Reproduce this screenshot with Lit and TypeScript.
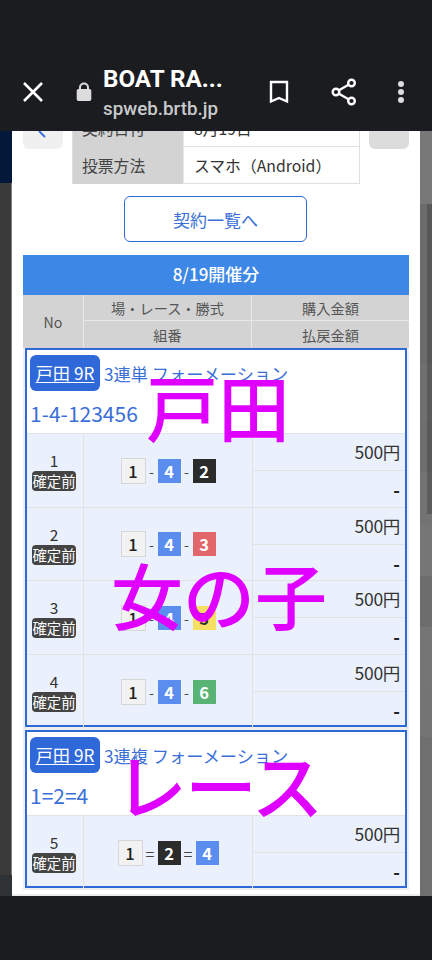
import { LitElement, html, css } from "lit";
import { customElement } from "lit/decorators.js";

const B: Record<number, string> = { 1: "w", 2: "k", 3: "r", 4: "b", 5: "y", 6: "g" };

const group1 = [
  { no: 1, seq: [1, 4, 2] },
  { no: 2, seq: [1, 4, 3] },
  { no: 3, seq: [1, 4, 5] },
  { no: 4, seq: [1, 4, 6] },
];

const rightStrip = [
  { h: 73, c: "#787878" },
  { h: 160, c: "#6c6c6c" },
  { h: 56, c: "#707070" },
  { h: 52, c: "#6e6e6e" },
  { h: 53, c: "#737373" },
  { h: 51, c: "#767676" },
  { h: 51, c: "#6d6d6d" },
  { h: 58, c: "#757575" },
  { h: 52, c: "#747474" },
  { h: 159, c: "#6f6f6f" },
];

@customElement("app-root")
export class AppRoot extends LitElement {
  static styles = css`
    :host {
      display: block;
      width: 432px;
      height: 960px;
      overflow: hidden;
      background: #1b1c20;
      font-family: "Noto Sans CJK JP", "Noto Sans", sans-serif;
    }
    .topbar {
      height: 78px;
      padding-top: 53px;
      display: flex;
      align-items: center;
      background: #1b1c20;
      color: #fff;
    }
    .topbar svg { display: block; flex: none; }
    .close { margin-left: 21px; }
    .lock { margin-left: 31px; }
    .titles {
      margin-left: 11px;
      width: 128px;
      display: flex;
      flex-direction: column;
      font-family: Roboto, sans-serif;
      margin-top: 1px;
    }
    .t1 { font-size: 24.2px; line-height: 28px; font-weight: 700; white-space: nowrap; }
    .t2 { font-size: 18.8px; line-height: 24px; margin-top: 4px; font-weight: 500; color: #c9cacc; white-space: nowrap; }
    .bm { margin-left: 38px; }
    .sh { margin-left: 42px; }
    .dots { margin-left: 41px; }

    .main { display: flex; height: 765px; overflow: hidden; }
    .left { width: 12px; flex: none; display: flex; flex-direction: column; background: #3a3a3a; box-shadow: inset -1px 0 0 #808080; }
    .navy { height: 52px; background: #04183a; }
    .lfill { flex: 1; }
    .lfoot { height: 21px; background: #2f3336; }
    .right { width: 12px; flex: none; position: relative; display: flex; flex-direction: column; box-shadow: inset 1px 0 0 #999; }
    .band { position: absolute; right: 0; top: 73px; width: 5px; height: 310px; background: rgba(40, 40, 40, 0.3); }
    .sheet { width: 408px; flex: none; background: #fff; padding: 0 11px; box-sizing: border-box; position: relative; box-shadow: inset 0 -2px 0 #ececec; }

    .top { display: grid; grid-template-columns: 40px 288px 40px; column-gap: 9px; align-items: start; height: 53px; }
    .nav { height: 18px; border-radius: 0 0 6px 6px; background: #f0f0f0; display: flex; justify-content: center; align-items: flex-start; overflow: hidden; }
    .nav.off { background: #dcdcdc; }
    .info { height: 53px; overflow: hidden; display: flex; flex-direction: column; justify-content: flex-end; }
    .irow { display: grid; grid-template-columns: 111px 1fr; height: 37px; flex: none; box-sizing: border-box; border: solid #e0e0e0; border-width: 0 1px 1px 1px; font-size: 15.8px; line-height: 38px; color: #333; }
    .irow .k { background: #d3d3d3; padding-left: 9px; color: #444; border-right: 1px solid #e8e8e8; }
    .irow .v { padding-left: 10px; }

    .btn {
      display: flex; align-items: center; justify-content: center;
      width: 183px; height: 46px; box-sizing: border-box;
      margin: 12px auto 0 101px;
      border: 1px solid #2f6bd6; border-radius: 6px;
      color: #3a70d8; font-size: 17px; background: #fff;
    }
    .sec {
      margin-top: 13px; height: 40px; line-height: 38px; text-align: center;
      background: #3d88e6; color: #fff; font-size: 17px; font-weight: 500;
    }
    .thead {
      display: grid; grid-template-columns: 61px 168px 157px; grid-template-rows: 26px 27px;
      background: #d3d3d3; color: #555; font-size: 14.2px;
    }
    .thead div { display: flex; align-items: center; justify-content: center; }
    .thead .no { grid-row: span 2; border-right: 1px solid #e8e8e8; }
    .thead .c2 { border-right: 1px solid #e8e8e8; }
    .thead .b { border-bottom: 1px solid #e8e8e8; }

    .groups { background: #eeeeee; padding: 0 2px 2px; }
    .frame { border: 2px solid #2f68d8; background: #fff; }
    .frame + .frame { margin-top: 3px; }
    .fhead { height: 83px; box-sizing: border-box; padding: 5px 0 0 3px; color: #3a6fd8; }
    .line1 { display: flex; align-items: center; height: 36px; font-size: 17.2px; white-space: nowrap; }
    .place { display: block; background: #2f68d8; color: #fff; border-radius: 6px; width: 70px; height: 36px; line-height: 35px; text-align: center; text-decoration: underline; text-underline-offset: 2px; margin-right: 4px; font-size: 17.2px; }
    .line2 { font-size: 21px; line-height: 30px; margin-top: 7px; }
    .row { display: grid; grid-template-columns: 56px 1px 168px 1px 1fr; height: 73.7px; background: #eaf1fd; border-top: 1px solid #e2e2e2; box-sizing: border-box; color: #333; }
    .row:last-child { height: 71px; }
    .sep { background: #e2e2e2; }
    .nocol { display: flex; flex-direction: column; align-items: center; justify-content: center; padding-right: 2px; font-size: 15.5px; line-height: 21px; }
    .tag { background: #444; color: #fff; border-radius: 4px; width: 44px; height: 20px; line-height: 19px; text-align: center; font-size: 14.4px; white-space: nowrap; }
    .seq { display: flex; align-items: center; justify-content: center; font-size: 14px; color: #444; }
    .seq .d { width: 12px; text-align: center; }
    .seq .e { width: 15px; text-align: center; font-size: 16px; }
    .bd { width: 23px; height: 24px; line-height: 24px; text-align: center; font-size: 16.5px; font-weight: 700; color: #fff; }
    .bd.w { background: #f2f2f2; color: #222; border: 1px solid #d6d6d6; font-weight: 500; }
    .bd.k { background: #2b2b2b; }
    .bd.r { background: #e2676a; }
    .bd.b { background: #5b8def; }
    .bd.y { background: #f6e064; color: #333; }
    .bd.g { background: #58b374; }
    .amt { display: grid; grid-template-rows: 37px 1fr; }
    .amt div { text-align: right; padding-right: 5px; }
    .a1 { font-size: 17.5px; letter-spacing: -0.3px; line-height: 36px; border-bottom: 1px solid #e2e2e2; color: #333; }
    .a2 { font-size: 18px; font-weight: 700; line-height: 36px; color: #222; }

    .mark {
      position: absolute; color: #df00ff; font-size: 72px; line-height: 72px;
      font-weight: 500; white-space: nowrap; pointer-events: none;
    }
    .m1 { left: 134px; top: 238px; }
    .m2 { left: 99px; top: 426px; }
    .m3 { left: 103px; top: 616px; letter-spacing: -2px; }
  `;

  private badge(n: number) {
    return html`<span class="bd ${B[n]}">${n}</span>`;
  }

  private row(no: number, seq: number[], sep: string) {
    return html`<div class="row">
      <div class="nocol"><span>${no}</span><span class="tag">確定前</span></div>
      <div class="sep"></div>
      <div class="seq">
        ${seq.map(
          (n, i) => html`${i > 0 ? html`<span class=${sep === "=" ? "e" : "d"}>${sep}</span>` : ""}${this.badge(n)}`
        )}
      </div>
      <div class="sep"></div>
      <div class="amt"><div class="a1">500円</div><div class="a2">-</div></div>
    </div>`;
  }

  render() {
    return html`
      <div class="topbar">
        <svg class="close" width="24" height="24" viewBox="0 0 24 24" fill="none" stroke="#fff" stroke-width="2.6">
          <path d="M3 3 L21 21 M21 3 L3 21" />
        </svg>
        <svg class="lock" width="16" height="20" viewBox="0 0 16 20">
          <path fill="#dcdcdc" d="M3 7V5.5a5 5 0 0 1 10 0V7h.5A1.8 1.8 0 0 1 15.3 8.8V17.2A1.8 1.8 0 0 1 13.5 19H2.5A1.8 1.8 0 0 1 .7 17.2V8.8A1.8 1.8 0 0 1 2.5 7ZM5 7h6V5.5a3 3 0 0 0-6 0Z" fill-rule="evenodd" />
        </svg>
        <div class="titles">
          <span class="t1">BOAT RA...</span>
          <span class="t2">spweb.brtb.jp</span>
        </div>
        <svg class="bm" width="20" height="24" viewBox="0 0 20 24" fill="none" stroke="#fff" stroke-width="2.4">
          <path d="M2 2 H18 V21.5 L10 18 L2 21.5 Z" />
        </svg>
        <svg class="sh" width="26" height="28" viewBox="0 0 26 28" fill="none" stroke="#fff" stroke-width="2.4">
          <circle cx="20.5" cy="5" r="3.3" />
          <circle cx="5" cy="14" r="3.3" />
          <circle cx="20.5" cy="23" r="3.3" />
          <path d="M8 12.2 L17.5 6.8 M8 15.8 L17.5 21.2" />
        </svg>
        <svg class="dots" width="6" height="22" viewBox="0 0 6 22" fill="#dcdcdc">
          <circle cx="3" cy="3" r="3" /><circle cx="3" cy="11" r="3" /><circle cx="3" cy="19" r="3" />
        </svg>
      </div>

      <div class="main">
        <div class="left">
          <div class="navy"></div>
          <div class="lfill"></div>
          <div class="lfoot"></div>
        </div>
        <div class="sheet">
          <div class="top">
            <div class="nav">
              <svg width="10" height="8" viewBox="0 0 10 8" fill="none" stroke="#2f6bd6" stroke-width="1.8"><path d="M1 0 L7 6" /></svg>
            </div>
            <div class="info">
              <div class="irow"><span class="k">契約日付</span><span class="v">8月19日</span></div>
              <div class="irow"><span class="k">投票方法</span><span class="v">スマホ（Android）</span></div>
            </div>
            <div class="nav off"></div>
          </div>
          <a class="btn">契約一覧へ</a>
          <div class="sec">8/19開催分</div>
          <div class="thead">
            <div class="no">No</div>
            <div class="c2 b">場・レース・勝式</div>
            <div class="b">購入金額</div>
            <div class="c2">組番</div>
            <div>払戻金額</div>
          </div>
          <div class="groups">
            <div class="frame">
              <div class="fhead">
                <div class="line1"><span class="place">戸田 9R</span>3連単 フォーメーション</div>
                <div class="line2">1-4-123456</div>
              </div>
              ${group1.map((r) => this.row(r.no, r.seq, "-"))}
            </div>
            <div class="frame">
              <div class="fhead">
                <div class="line1"><span class="place">戸田 9R</span>3連複 フォーメーション</div>
                <div class="line2">1=2=4</div>
              </div>
              ${this.row(5, [1, 2, 4], "=")}
            </div>
          </div>
          <div class="mark m1">戸田</div>
          <div class="mark m2">女の子</div>
          <div class="mark m3">レース</div>
        </div>
        <div class="right">
          ${rightStrip.map((s) => html`<div style="height:${s.h}px;background:${s.c}"></div>`)}
          <div class="band"></div>
        </div>
      </div>
    `;
  }
}
